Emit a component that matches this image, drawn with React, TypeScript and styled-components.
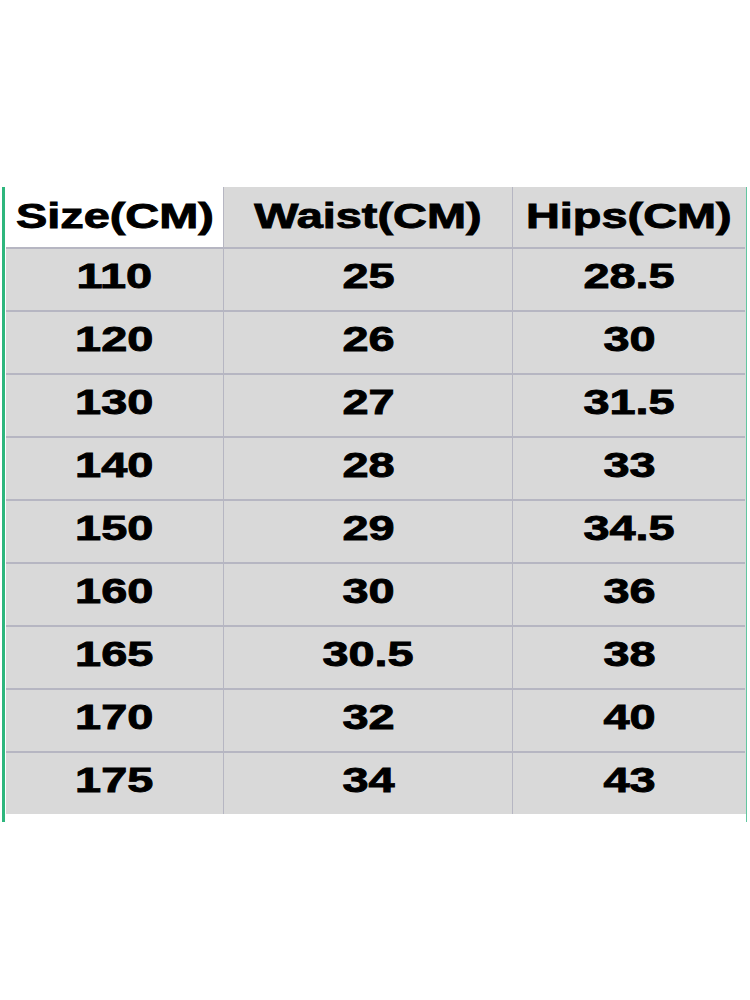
import React from "react";
import styled, { createGlobalStyle } from "styled-components";

const GlobalStyle = createGlobalStyle`
    html, body {
        margin: 0;
        padding: 0;
        background: #ffffff;
    }
`;

const Page = styled.div`
    width: 750px;
    height: 1000px;
    padding-top: 187px;
    box-sizing: border-box;
    font-family: "Liberation Sans", Arial, sans-serif;
`;

const Frame = styled.div`
    margin-left: 2px;
    width: 745px;
    border-left: 3px solid #2eb67d;
    border-right: 1px solid #62c6a0;
    padding: 0 0 8px 1px;
    box-sizing: border-box;
`;

const Grid = styled.div`
    display: grid;
    grid-template-columns: 217px 289px 233px;
    grid-template-rows: 60px repeat(9, 63px);
    background: #d9d9d9;
`;

const Cell = styled.div<{ $white?: boolean; $first?: boolean; $top?: boolean }>`
    display: flex;
    align-items: center;
    justify-content: center;
    padding-bottom: ${(p) => (p.$top ? "4px" : "9px")};
    box-sizing: border-box;
    background: ${(p) => (p.$white ? "#ffffff" : "#d9d9d9")};
    border-left: ${(p) => (p.$first ? "none" : "1.5px solid #b6b6c2")};
    border-top: ${(p) => (p.$top ? "none" : "2px solid #b6b6c2")};
`;

const Label = styled.span`
    display: inline-block;
    font-size: 35px;
    font-weight: 700;
    color: #000;
    line-height: 1;
    transform: scaleX(1.34);
    -webkit-text-stroke: 0.9px #000;
    white-space: nowrap;
`;

const header = ["Size(CM)", "Waist(CM)", "Hips(CM)"];

const rows: string[][] = [
    ["110", "25", "28.5"],
    ["120", "26", "30"],
    ["130", "27", "31.5"],
    ["140", "28", "33"],
    ["150", "29", "34.5"],
    ["160", "30", "36"],
    ["165", "30.5", "38"],
    ["170", "32", "40"],
    ["175", "34", "43"],
];

const App: React.FC = () => {
    return (
        <Page>
            <GlobalStyle />
            <Frame>
                <Grid>
                    {header.map((h, i) => (
                        <Cell key={h} $top $first={i === 0} $white={i === 0}>
                            <Label>{h}</Label>
                        </Cell>
                    ))}
                    {rows.map((row) =>
                        row.map((v, i) => (
                            <Cell key={row[0] + "-" + i} $first={i === 0}>
                                <Label>{v}</Label>
                            </Cell>
                        ))
                    )}
                </Grid>
            </Frame>
        </Page>
    );
};

export default App;
